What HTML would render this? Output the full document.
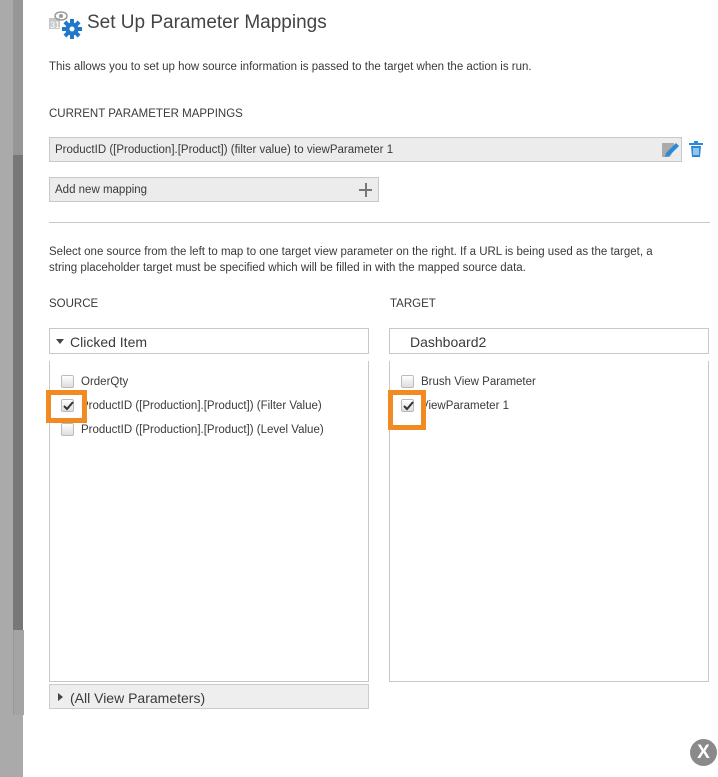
<!DOCTYPE html>
<html><head><style>
body{margin:0;width:718px;height:777px;background:#fff;position:relative;overflow:hidden;font-family:"Liberation Sans",sans-serif;color:#3a3a3a}
.a{position:absolute}
.t{font-size:11.5px;white-space:nowrap}
.box{position:absolute;box-sizing:border-box;border:1px solid #c8c8c8}
.cb{position:absolute;width:13px;height:13px;box-sizing:border-box;border:1px solid #bbb;border-radius:2px;background:linear-gradient(#fff,#ddd)}
.or{position:absolute;box-sizing:border-box;border:5px solid #f28a24}
</style></head><body>
<div class="a" style="left:0;top:0;width:23px;height:777px;background:#aaa"></div>
<div class="a" style="left:13px;top:0;width:10px;height:155px;background:#969696"></div>
<div class="a" style="left:13px;top:155px;width:10px;height:475px;background:#777"></div>
<div class="a" style="left:13px;top:630px;width:10px;height:85px;background:#a4a4a4;border-left:1px solid #999"></div>

<svg class="a" style="left:48px;top:8px" width="34" height="32" viewBox="0 0 34 32">
<rect x="1" y="10" width="11" height="11" fill="#c8c8c8"/><text x="2" y="20" font-size="9" fill="#fff" font-family="Liberation Sans">31</text>
<ellipse cx="13" cy="8" rx="6" ry="4" fill="none" stroke="#999" stroke-width="1.5"/><circle cx="13" cy="8" r="2" fill="#999"/>
<g transform="translate(24,21)" fill="#1f78c8"><circle r="6.5"/><g><rect x="-2" y="-10" width="4" height="20"/><rect x="-10" y="-2" width="20" height="4"/><rect x="-2" y="-10" width="4" height="20" transform="rotate(45)"/><rect x="-2" y="-10" width="4" height="20" transform="rotate(-45)"/></g><circle r="2.5" fill="#fff"/></g>
</svg>
<div class="a" style="left:87px;top:12px;font-size:19px;color:#444">Set Up Parameter Mappings</div>
<div class="a t" style="left:49px;top:61px">This allows you to set up how source information is passed to the target when the action is run.</div>
<div class="a t" style="left:49px;top:108px">CURRENT PARAMETER MAPPINGS</div>
<div class="box" style="left:49px;top:137px;width:633px;height:25px;background:#ececec"></div>
<div class="a t" style="left:55px;top:144px">ProductID ([Production].[Product]) (filter value) to viewParameter 1</div>
<svg class="a" style="left:660px;top:139px" width="20" height="20"><path d="M2 4h12v6l-4 8H2z" fill="#aaa"/><path d="M6 14l10-10 3 3-10 10-4 1z" fill="#2a8ad8"/></svg>
<svg class="a" style="left:688px;top:141px" width="16" height="17"><rect x="1" y="2" width="14" height="2" fill="#2a8ad8"/><rect x="6" y="0" width="4" height="2" fill="#2a8ad8"/><path d="M3 5h10l-1 11H4z" fill="#2a8ad8"/><path d="M6 7v7M8 7v7M10 7v7" stroke="#fff" stroke-width="1"/></svg>
<div class="box" style="left:49px;top:177px;width:330px;height:25px;background:#ececec"></div>
<div class="a t" style="left:55px;top:184px">Add new mapping</div>
<div class="a" style="left:359px;top:189px;width:13px;height:2px;background:#777"></div>
<div class="a" style="left:365px;top:183px;width:2px;height:14px;background:#777"></div>
<div class="a" style="left:49px;top:222px;width:661px;height:1px;background:#c8c8c8"></div>
<div class="a" style="left:49px;top:244px;width:625px;font-size:11.5px;line-height:16px">Select one source from the left to map to one target view parameter on the right. If a URL is being used as the target, a string placeholder target must be specified which will be filled in with the mapped source data.</div>
<div class="a t" style="left:49px;top:298px">SOURCE</div>
<div class="a t" style="left:390px;top:298px">TARGET</div>
<div class="box" style="left:49px;top:328px;width:320px;height:26px"></div>
<div class="a" style="left:56px;top:339px;border-left:4px solid transparent;border-right:4px solid transparent;border-top:5px solid #444"></div>
<div class="a" style="left:70px;top:334px;font-size:14px">Clicked Item</div>
<div class="box" style="left:389px;top:328px;width:320px;height:26px"></div>
<div class="a" style="left:410px;top:334px;font-size:14px">Dashboard2</div>
<div class="box" style="left:49px;top:361px;width:320px;height:321px;border-top:none"></div>
<div class="box" style="left:389px;top:361px;width:320px;height:321px;border-top:none"></div>
<div class="cb" style="left:61px;top:375px"></div><div class="a t" style="left:81px;top:376px">OrderQty</div>
<div class="cb" style="left:61px;top:399px"></div><div class="a t" style="left:81px;top:400px">ProductID ([Production].[Product]) (Filter Value)</div>
<div class="cb" style="left:61px;top:423px"></div><div class="a t" style="left:81px;top:424px">ProductID ([Production].[Product]) (Level Value)</div>
<div class="cb" style="left:401px;top:375px"></div><div class="a t" style="left:421px;top:376px">Brush View Parameter</div>
<div class="cb" style="left:401px;top:399px"></div><div class="a t" style="left:421px;top:400px">ViewParameter 1</div>
<svg class="a" style="left:62px;top:400px" width="12" height="12"><path d="M2 6l3 3 6-7" fill="none" stroke="#333" stroke-width="2"/></svg>
<svg class="a" style="left:402px;top:400px" width="12" height="12"><path d="M2 6l3 3 6-7" fill="none" stroke="#333" stroke-width="2"/></svg>
<div class="or" style="left:46px;top:390px;width:41px;height:33px"></div>
<div class="or" style="left:388px;top:390px;width:38px;height:40px"></div>
<div class="box" style="left:49px;top:684px;width:320px;height:25px;background:#eee;border-color:#ccc"></div>
<div class="a" style="left:58px;top:693px;border-top:4px solid transparent;border-bottom:4px solid transparent;border-left:5px solid #444"></div>
<div class="a" style="left:70px;top:690px;font-size:14px">(All View Parameters)</div>
<div class="a" style="left:690px;top:739px;width:27px;height:27px;border-radius:50%;background:#8a8a8a;color:#fff;font-weight:bold;font-size:19px;text-align:center;line-height:27px">X</div>
</body></html>
